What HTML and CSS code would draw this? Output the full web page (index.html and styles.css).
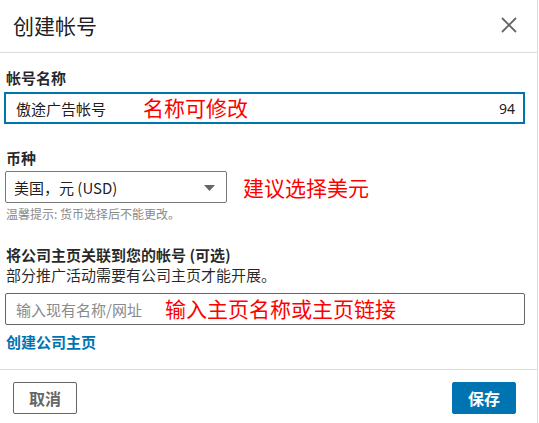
FILE: index.html
```html
<!DOCTYPE html>
<html lang="zh-CN">
<head>
<meta charset="utf-8">
<title>创建帐号</title>
<link rel="stylesheet" href="styles.css">
</head>
<body>
<div class="dialog">
  <header class="dlg-header">
    <h1 class="dlg-title">创建帐号</h1>
    <button class="close" aria-label="关闭">
      <svg width="16" height="16" viewBox="0 0 16 16"><path d="M1 1 L15 15 M15 1 L1 15" stroke="#666" stroke-width="1.8" fill="none"/></svg>
    </button>
  </header>
  <main class="dlg-body">
    <div class="label l1">帐号名称</div>
    <div class="field text-input focused">
      <span class="value">傲途广告帐号</span>
      <span class="counter">94</span>
      <span class="note note1">名称可修改</span>
    </div>

    <div class="label l2">币种</div>
    <div class="select-row">
      <div class="field select">
        <span class="value">美国，元 (USD)</span>
        <svg class="caret" width="11" height="6" viewBox="0 0 11 6"><path d="M0 0 H11 L5.5 6 Z" fill="#666"/></svg>
      </div>
      <span class="note2">建议选择美元</span>
    </div>
    <div class="hint">温馨提示: 货币选择后不能更改。</div>

    <div class="label l3">将公司主页关联到您的帐号 (可选)</div>
    <div class="desc">部分推广活动需要有公司主页才能开展。</div>
    <div class="field text-input plain">
      <span class="placeholder">输入现有名称/网址</span>
      <span class="note note3">输入主页名称或主页链接</span>
    </div>
    <a class="link" href="#">创建公司主页</a>
  </main>
  <footer class="dlg-footer">
    <button class="btn btn-secondary">取消</button>
    <button class="btn btn-primary">保存</button>
  </footer>
</div>
</body>
</html>
```

FILE: styles.css
```css
* { box-sizing: border-box; }
html, body { margin: 0; padding: 0; background: #fff; }
body {
  font-family: "Noto Sans", "Noto Sans CJK SC", sans-serif;
  color: rgba(0,0,0,0.9);
}
.dialog {
  width: 538px;
  height: 423px;
  border-right: 1px solid #dcdcdc;
  display: flex;
  flex-direction: column;
}
.dlg-header {
  height: 53px;
  border-bottom: 1px solid #dcdcdc;
  display: flex;
  align-items: center;
  justify-content: space-between;
  padding: 0 20px 2px 13px;
}
.dlg-title {
  margin: 0;
  font-size: 21px;
  font-weight: 400;
  line-height: 26px;
  font-family: "Noto Sans CJK SC", sans-serif;
  color: rgba(0,0,0,0.9);
}
.close {
  border: 0;
  background: none;
  padding: 0;
  width: 16px;
  height: 16px;
  display: flex;
}
.dlg-body {
  flex: 1;
  padding: 0 12px 0 4px;
  display: flex;
  flex-direction: column;
  align-items: flex-start;
}
.label {
  font-family: "Noto Sans CJK SC", sans-serif;
  font-size: 15px;
  font-weight: 700;
  line-height: 20px;
  padding-left: 2px;
  color: rgba(0,0,0,0.85);
}
.l1 { margin-top: 15px; }
.l2 { margin-top: 24px; }
.l3 { margin-top: 23px; }
.field {
  position: relative;
  display: flex;
  align-items: center;
  height: 32px;
  font-family: "Noto Sans CJK SC", sans-serif;
  font-size: 15px;
}
.text-input { width: 521px; }
.focused {
  margin-top: 4px;
  border: 2px solid #0073b1;
  padding: 0 8px 0 10px;
  justify-content: space-between;
}
.counter { font-family: "Noto Sans", sans-serif; font-size: 14px; }
.plain {
  margin-top: 9px;
  margin-left: 1px;
  width: 520px;
  border: 1px solid #666;
  border-radius: 2px;
  padding: 0 10px;
}
.placeholder { color: #8a8a8a; }
.note {
  position: absolute;
  color: #ff0000;
  font-size: 21px;
  line-height: 26px;
  font-family: "Noto Sans CJK SC", sans-serif;
}
.note1 { left: 137px; top: 0px; }
.note3 { left: 159px; top: 1px; }
.select-row {
  margin-top: 3px;
  margin-left: 1px;
  display: flex;
  align-items: center;
}
.select {
  width: 222px;
  border: 1px solid #777;
  border-radius: 2px;
  padding: 0 11px 0 8px;
  justify-content: space-between;
}
.select .value { font-family: "Noto Sans CJK SC", sans-serif; }
.caret { margin-top: 1px; }
.note2 {
  margin-left: 16px;
  color: #ff0000;
  font-size: 21px;
  line-height: 26px;
  font-family: "Noto Sans CJK SC", sans-serif;
}
.hint {
  margin-top: 3px;
  padding-left: 2px;
  font-size: 12px;
  line-height: 16px;
  color: #8a8a8a;
  font-family: "Noto Sans CJK SC", sans-serif;
}
.desc {
  margin-top: 1px;
  padding-left: 2px;
  font-size: 15px;
  line-height: 18px;
  font-family: "Noto Sans CJK SC", sans-serif;
  color: rgba(0,0,0,0.85);
}
.link {
  margin-top: 7px;
  padding-left: 2px;
  font-size: 15px;
  line-height: 20px;
  font-weight: 700;
  color: #0073b1;
  text-decoration: none;
  font-family: "Noto Sans CJK SC", sans-serif;
}
.dlg-footer {
  height: 54px;
  border-top: 1px solid #dcdcdc;
  display: flex;
  justify-content: space-between;
  align-items: flex-start;
  padding: 12px 21px 0 13px;
}
.btn {
  width: 64px;
  height: 32px;
  font-family: "Noto Sans CJK SC", sans-serif;
  font-size: 16px;
  font-weight: 700;
  border-radius: 2px;
  cursor: pointer;
  padding: 0;
}
.btn-secondary {
  background: #fff;
  border: 1px solid #666;
  color: #666;
}
.btn-primary {
  background: #0073b1;
  border: 1px solid #0073b1;
  color: #fff;
}
```
